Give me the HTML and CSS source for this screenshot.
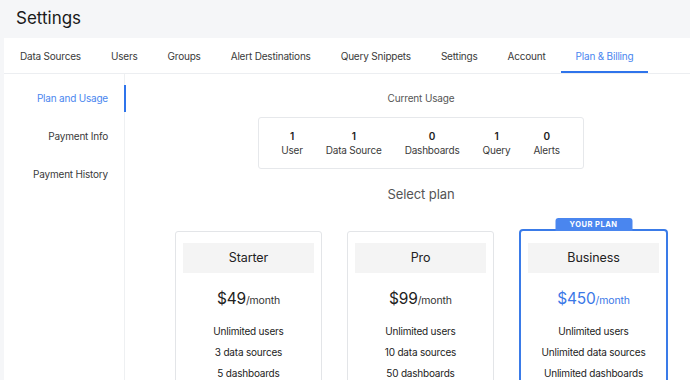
FILE: index.html
```html
<!DOCTYPE html>
<html>
<head>
<meta charset="utf-8">
<link rel="stylesheet" href="styles.css">
</head>
<body>
<div class="page-title">Settings</div>
<div class="panel">
  <nav class="tabs">
    <a class="tab">Data Sources</a>
    <a class="tab">Users</a>
    <a class="tab">Groups</a>
    <a class="tab">Alert Destinations</a>
    <a class="tab">Query Snippets</a>
    <a class="tab">Settings</a>
    <a class="tab">Account</a>
    <a class="tab active">Plan &amp; Billing</a>
  </nav>
  <div class="content">
    <aside class="sidebar">
      <a class="side-item active">Plan and Usage</a>
      <a class="side-item">Payment Info</a>
      <a class="side-item">Payment History</a>
    </aside>
    <main class="main">
      <div class="usage-title">Current Usage</div>
      <div class="usage-box">
        <div class="usage-item"><div class="num">1</div><div class="lbl">User</div></div>
        <div class="usage-item"><div class="num">1</div><div class="lbl">Data Source</div></div>
        <div class="usage-item"><div class="num">0</div><div class="lbl">Dashboards</div></div>
        <div class="usage-item"><div class="num">1</div><div class="lbl">Query</div></div>
        <div class="usage-item"><div class="num">0</div><div class="lbl">Alerts</div></div>
      </div>
      <div class="select-title">Select plan</div>
      <div class="plans">
        <div class="plan">
          <div class="plan-name">Starter</div>
          <div class="price"><span class="amount">$49</span><span class="per">/month</span></div>
          <ul class="features">
            <li>Unlimited users</li>
            <li>3 data sources</li>
            <li>5 dashboards</li>
          </ul>
        </div>
        <div class="plan">
          <div class="plan-name">Pro</div>
          <div class="price"><span class="amount">$99</span><span class="per">/month</span></div>
          <ul class="features">
            <li>Unlimited users</li>
            <li>10 data sources</li>
            <li>50 dashboards</li>
          </ul>
        </div>
        <div class="plan current">
          <div class="plan-tag">YOUR PLAN</div>
          <div class="plan-name">Business</div>
          <div class="price"><span class="amount">$450</span><span class="per">/month</span></div>
          <ul class="features">
            <li>Unlimited users</li>
            <li>Unlimited data sources</li>
            <li>Unlimited dashboards</li>
          </ul>
        </div>
      </div>
    </main>
  </div>
</div>
</body>
</html>
```

FILE: styles.css
```css
* { box-sizing: border-box; }
html, body { margin: 0; padding: 0; }
body {
  background: #f5f6f8;
  font-family: Inter, "Noto Sans", "Liberation Sans", sans-serif;
  color: #333;
  overflow: hidden;
  width: 690px;
  height: 380px;
}
.page-title {
  height: 38px;
  line-height: 36px;
  padding-left: 16px;
  font-size: 17px;
  color: #1a1a1a;
}
.panel {
  margin-left: 4px;
  background: #fff;
  width: 720px;
  height: 400px;
}
.tabs {
  display: flex;
  height: 36px;
  border-bottom: 1px solid #eceef1;
  padding-left: 1px;
}
.tab {
  padding: 1px 15px 0;
  font-size: 10px;
  letter-spacing: -0.2px;
  line-height: 34px;
  color: #3a3a3a;
  white-space: nowrap;
  border-bottom: 2px solid transparent;
}
.tab.active {
  color: #4a86ef;
  border-bottom-color: #2f74eb;
}
.content {
  display: flex;
}
.sidebar {
  width: 121px;
  flex: none;
  border-right: 1px solid #eef0f2;
  padding-top: 11px;
  height: 320px;
  display: flex;
  flex-direction: column;
  gap: 11px;
}
.side-item {
  display: block;
  height: 27px;
  line-height: 27px;
  text-align: right;
  padding-right: 16px;
  font-size: 10px;
  letter-spacing: -0.2px;
  color: #3a3a3a;
  position: relative;
}
.side-item.active {
  color: #4a86ef;
}
.side-item.active::after {
  content: "";
  position: absolute;
  right: -2px;
  top: 0;
  width: 2px;
  height: 27px;
  background: #2f74eb;
}
.main {
  width: 592px;
  flex: none;
  text-align: center;
  padding-top: 17px;
}
.usage-title {
  font-size: 10px;
  letter-spacing: -0.15px;
  line-height: 14px;
  color: #555;
}
.usage-box {
  display: inline-flex;
  gap: 23px;
  margin-top: 12px;
  padding: 11px 23px 11px 22px;
  border: 1px solid #e6e8eb;
  border-radius: 3px;
}
.usage-item {
  font-size: 10px;
  letter-spacing: -0.2px;
  line-height: 14px;
}
.num {
  font-weight: 600;
  color: #222;
}
.lbl {
  color: #3a3a3a;
}
.select-title {
  margin-top: 17px;
  font-size: 13px;
  letter-spacing: -0.1px;
  line-height: 17px;
  color: #555;
}
.plans {
  display: flex;
  justify-content: center;
  align-items: flex-start;
  gap: 25px;
  margin-top: 28px;
  padding-left: 1px;
}
.plan {
  position: relative;
  width: 147px;
  border: 1px solid #e3e5e8;
  border-radius: 3px;
  padding: 11px 7px 20px;
}
.plan.current {
  width: 149px;
  border: 2px solid #3a7be8;
  border-radius: 4px;
  margin-top: -2px;
  padding-top: 12px;
}
.plan-tag {
  position: absolute;
  left: 50%;
  bottom: 100%;
  transform: translateX(-50%);
  width: 77px;
  height: 13px;
  background: #4a86ef;
  color: #fff;
  font-size: 7.5px;
  font-weight: 700;
  line-height: 13px;
  letter-spacing: 0.5px;
  border-radius: 3px 3px 0 0;
}
.plan-name {
  height: 30px;
  line-height: 30px;
  background: #f4f4f4;
  font-size: 12.5px;
  letter-spacing: -0.1px;
  color: #222;
}
.price {
  margin-top: 15px;
  line-height: 20px;
  color: #222;
}
.amount {
  font-size: 15.5px;
  letter-spacing: -0.2px;
}
.per {
  font-size: 10.5px;
  letter-spacing: -0.15px;
  color: #333;
}
.plan.current .amount,
.plan.current .per {
  color: #3b78e7;
}
.features {
  list-style: none;
  margin: 10px 0 0;
  padding: 0;
  font-size: 10px;
  letter-spacing: -0.2px;
  line-height: 21px;
  color: #222;
}
```
